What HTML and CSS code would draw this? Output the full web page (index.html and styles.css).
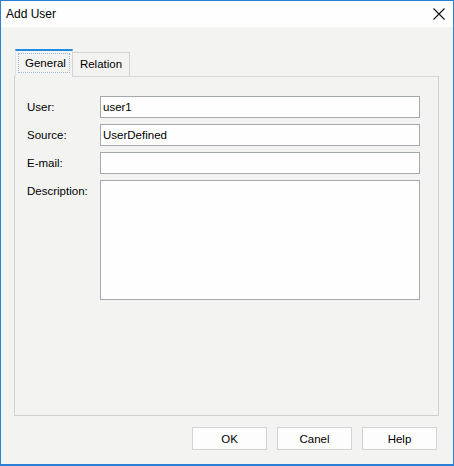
FILE: index.html
```html
<!DOCTYPE html>
<html>
<head>
<meta charset="utf-8">
<link rel="stylesheet" href="styles.css">
</head>
<body>
<div class="window">
  <div class="titlebar">
    <span class="title">Add User</span>
    <svg class="close" width="12" height="12" viewBox="0 0 12 12"><path d="M0.5 0.5 L11.5 11.5 M11.5 0.5 L0.5 11.5" stroke="#111" stroke-width="1.1" fill="none"/></svg>
  </div>
  <div class="content">
    <div class="tabs">
      <div class="tab active"><span class="focus">General</span></div>
      <div class="tab">Relation</div>
    </div>
    <div class="panel">
      <div class="row"><label class="lbl">User:</label><div class="field">user1</div></div>
      <div class="row"><label class="lbl">Source:</label><div class="field">UserDefined</div></div>
      <div class="row"><label class="lbl">E-mail:</label><div class="field"></div></div>
      <div class="row"><label class="lbl">Description:</label><div class="field area"></div></div>
    </div>
    <div class="buttons">
      <div class="btn">OK</div>
      <div class="btn">Canel</div>
      <div class="btn">Help</div>
    </div>
  </div>
</div>
</body>
</html>
```
FILE: styles.css
```css
* { box-sizing: border-box; }
html, body { margin: 0; padding: 0; }
body {
  font-family: "Liberation Sans", Arial, sans-serif;
  font-size: 11.5px;
  color: #000;
  background: #fff;
}
.window {
  width: 454px;
  height: 466px;
  border: 1px solid #2b7fd4;
  border-bottom-width: 2px;
  background: #f3f4f2;
  display: flex;
  flex-direction: column;
}
.titlebar {
  height: 26px;
  background: #fdfefd;
  display: flex;
  align-items: center;
  justify-content: space-between;
  padding: 0 8px 0 5px;
}
.title { font-size: 12px; color: #000; }
.content {
  flex: 1;
  padding: 22px 14px 0 13px;
  display: flex;
  flex-direction: column;
}
.tabs {
  display: flex;
  align-items: flex-end;
  padding-left: 1px;
  height: 27px;
  position: relative;
  z-index: 1;
}
.tab {
  height: 24px;
  padding: 0 0 2px;
  border: 1px solid #d3d3d3;
  border-bottom: none;
  display: flex;
  align-items: center;
  background: #f3f4f2;
  width: 57px;
  justify-content: center;
}
.tab.active {
  border-top: 2px solid #1e8ce0;
  width: 58px;
  padding: 1px 2px 3px;
  margin-bottom: -1px;
  height: 28px;
  border-left: 1px solid #e2e3e1;
  border-right: 1px solid #d3d3d3;
}
.tab.active .focus {
  border: 1px dotted #9db8d0;
  padding: 3px 6px;
  width: 100%;
  text-align: center;
}
.tab + .tab { border-left: none; }
.panel {
  width: 425px;
  height: 340px;
  border: 1px solid #d0d0cf;
  border-top-color: #d6d6d5;
  padding: 19px 18px 0 12px;
  display: flex;
  flex-direction: column;
  gap: 6px;
}
.row {
  display: flex;
  align-items: flex-start;
}
.lbl {
  width: 73px;
  line-height: 22px;
  color: #000;
}
.field {
  width: 320px;
  height: 22px;
  border: 1px solid #a5a9b0;
  background: #fdfefd;
  line-height: 20px;
  padding-left: 2px;
}
.field.area { height: 120px; }
.buttons {
  display: flex;
  justify-content: flex-end;
  gap: 10px;
  margin-top: 11px;
  padding-right: 2px;
}
.btn {
  width: 75px;
  height: 23px;
  border: 1px solid #d3d3d3;
  background: #fdfdfd;
  display: flex;
  align-items: center;
  justify-content: center;
}
```
